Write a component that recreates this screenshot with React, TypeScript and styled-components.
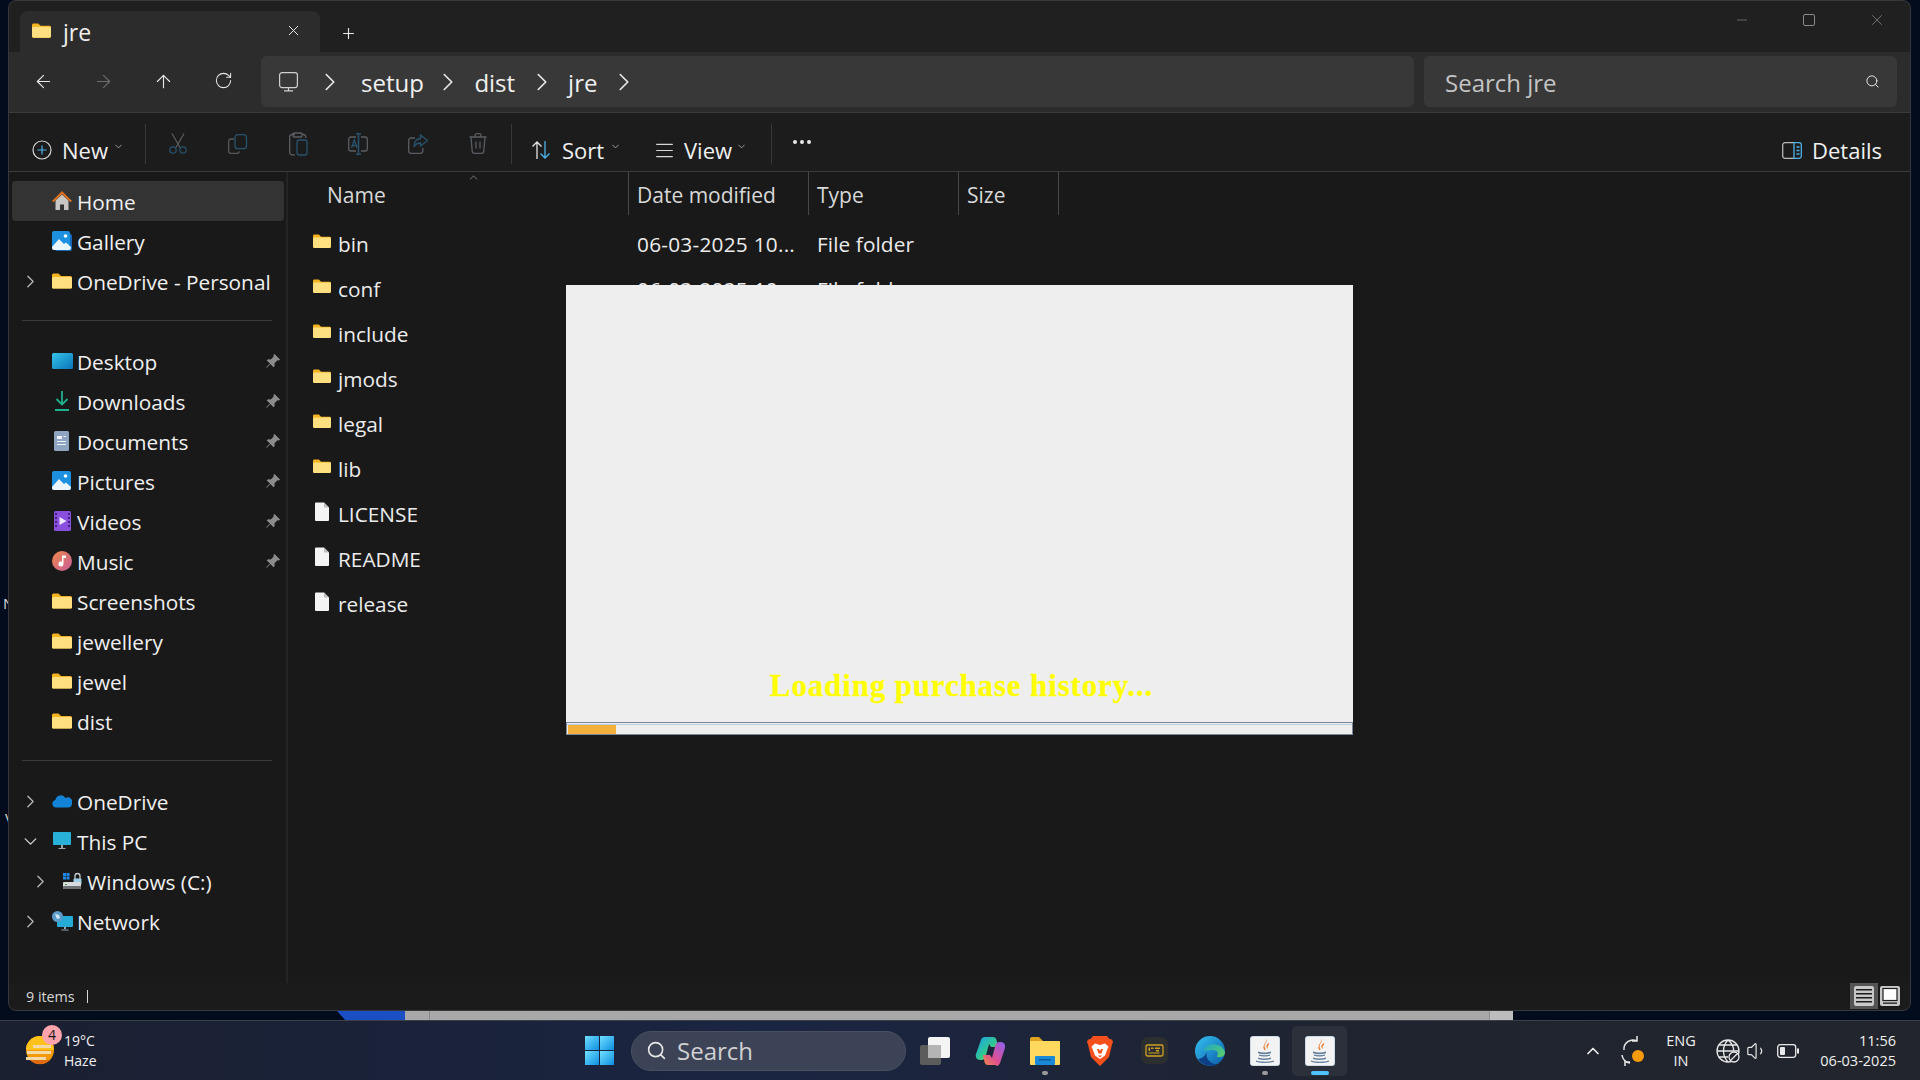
import React from "react";
import styled, { createGlobalStyle } from "styled-components";
import {
  ArrowLeft,
  ArrowRight,
  ArrowUp,
  RotateCw,
  ChevronRight,
  ChevronDown,
  ChevronUp,
  X,
  Plus,
  Minus,
  Search,
  MoreHorizontal,
  AlignJustify,
  Volume1,
} from "lucide-react";

const UI_FONT = `"Open Sans", "Noto Sans", "Liberation Sans", sans-serif`;

const GlobalStyle = createGlobalStyle`
  html, body { margin: 0; padding: 0; background: #020c1c; overflow: hidden; }
  * { box-sizing: border-box; }
  body { font-family: ${UI_FONT}; }
`;

/* ---------- drawn icons ---------- */

function FolderIcon({ size = 20 }: { size?: number }) {
  return (
    <svg width={size} height={size * 0.8} viewBox="0 0 20 16">
      <path d="M0 2a1.500 1.500 0 0 1 1.500-1.500h5L9 3h9.500A1.500 1.500 0 0 1 20 4.500V14a1.500 1.500 0 0 1-1.500 1.500h-17A1.500 1.500 0 0 1 0 14z" fill="#f4b320" />
      <path d="M0 5.500A1.500 1.500 0 0 1 1.500 4H18.500A1.500 1.500 0 0 1 20 5.500V14a1.500 1.500 0 0 1-1.500 1.500h-17A1.500 1.500 0 0 1 0 14z" fill="#ffdf80" />
    </svg>
  );
}

function FileIcon() {
  return (
    <svg width="18" height="20" viewBox="0 0 18 20">
      <path d="M2 1.500A1 1 0 0 1 3 .5h8l5 5V18a1 1 0 0 1-1 1H3a1 1 0 0 1-1-1z" fill="#f4f4f4" />
      <path d="M11 .5l5 5h-4a1 1 0 0 1-1-1z" fill="#bdbdbd" />
    </svg>
  );
}

function HomeIcon() {
  return (
    <svg width="20" height="20" viewBox="0 0 20 20">
      <path d="M3.500 9.500L10 3.500l6.500 6V19h-4.500v-5.500H8V19H3.500z" fill="#c9c5c2" />
      <path d="M0 10L10 0l10 10-1.500 1.200L10 3 1.500 11.200z" fill="#e0701c" />
    </svg>
  );
}

function PictureIcon({ stacked }: { stacked?: boolean }) {
  return (
    <svg width="20" height="20" viewBox="0 0 20 20">
      {stacked && <rect x="3" y="3" width="17" height="17" rx="2" fill="#1668b8" />}
      <rect x="0" y="0" width={stacked ? 18 : 19} height={stacked ? 18 : 19} rx="2" fill="#1e90e0" />
      <circle cx="13.500" cy="5" r="1.800" fill="#fff" />
      <path d="M0 16l7-8 5 5 2-1.500 5 4.500v1a2 2 0 0 1-2 2H2a2 2 0 0 1-2-2z" fill="#eaf5fd" />
    </svg>
  );
}

function DesktopIcon() {
  return (
    <svg width="21" height="17" viewBox="0 0 21 17">
      <defs>
        <linearGradient id="desk" x1="0" y1="0" x2="1" y2="1">
          <stop offset="0" stopColor="#35c4e8" />
          <stop offset="1" stopColor="#0a74b8" />
        </linearGradient>
      </defs>
      <rect width="21" height="16" rx="1.500" fill="url(#desk)" />
    </svg>
  );
}

function DownloadIcon() {
  return (
    <svg width="18" height="20" viewBox="0 0 18 20" fill="none" stroke="#1fb08e" strokeWidth="1.800">
      <path d="M9 0v13M3.500 8L9 13.500 14.500 8M2 19h14" />
    </svg>
  );
}

function DocumentIcon() {
  return (
    <svg width="16" height="20" viewBox="0 0 16 20">
      <rect width="15" height="20" rx="1.500" fill="#8ea4c0" />
      <path d="M3 5h5v3H3zM3 10h9v1H3zM3 13h9v1H3zM9.500 5H12v1H9.500z" fill="#eef3f8" />
    </svg>
  );
}

function VideoIcon() {
  return (
    <svg width="17" height="20" viewBox="0 0 17 20">
      <rect width="17" height="20" rx="1.500" fill="#8a4fdc" />
      <path d="M5.500 6l7 4-7 4z" fill="#f0e6ff" />
      <path d="M1 2h2v2H1zM1 6h2v2H1zM1 10h2v2H1zM1 14h2v2H1zM14 2h2v2h-2zM14 6h2v2h-2zM14 10h2v2h-2zM14 14h2v2h-2z" fill="#42207e" />
    </svg>
  );
}

function MusicIcon() {
  return (
    <svg width="20" height="20" viewBox="0 0 20 20">
      <defs>
        <linearGradient id="mus" x1="0" y1="0" x2="1" y2="1">
          <stop offset="0" stopColor="#f08a4a" />
          <stop offset="1" stopColor="#c85a9a" />
        </linearGradient>
      </defs>
      <circle cx="10" cy="10" r="10" fill="url(#mus)" />
      <path d="M10 4.500h4v2.500h-2.500v6a2.500 2.500 0 1 1-1.500-2.300z" fill="#fff" />
    </svg>
  );
}

function CloudIcon() {
  return (
    <svg width="20" height="14" viewBox="0 0 20 14">
      <path d="M4 13.500a3.800 3.800 0 0 1-.6-7.500A5.500 5.500 0 0 1 13.500 4a4.500 4.500 0 0 1 6.500 5.500 4 4 0 0 1-3.500 4z" fill="#1383d8" />
    </svg>
  );
}

function ThisPcIcon() {
  return (
    <svg width="18" height="18" viewBox="0 0 18 18">
      <rect width="18" height="13" rx="1" fill="#29b0d8" />
      <path d="M8 13h2v3H8zM5.500 16h7v1h-7z" fill="#9aa4ac" />
    </svg>
  );
}

function DriveIcon() {
  return (
    <svg width="20" height="18" viewBox="0 0 20 18">
      <path d="M1 1h3v3H1zM4.500 1h3v3h-3zM1 4.500h3v3H1zM4.500 4.500h3v3h-3z" fill="#1e88e5" />
      <path d="M13 7V4a2.500 2.500 0 0 1 5 0v3" fill="none" stroke="#c8ccd0" strokeWidth="1.300" />
      <rect x="11.500" y="6.500" width="8" height="6" rx="1" fill="#9fd0ea" />
      <rect x="1" y="10" width="18" height="7" rx="1" fill="#d8dadc" />
      <rect x="1" y="14" width="18" height="3" rx="1" fill="#6c7074" />
      <rect x="3" y="12" width="2" height="1" fill="#38a838" />
    </svg>
  );
}

function NetworkIcon() {
  return (
    <svg width="21" height="20" viewBox="0 0 21 20">
      <rect x="5" y="5" width="16" height="11" rx="1" fill="#25abd6" />
      <path d="M12 16h2v2h-2zM9.500 18.500h7v1h-7z" fill="#9aa4ac" />
      <circle cx="5.500" cy="5.500" r="5.500" fill="#5c9ccb" />
      <path d="M3 3l4 1 1 3-3 1z" fill="#d6e7f3" />
    </svg>
  );
}

function PinIcon() {
  return (
    <svg width="14" height="14" viewBox="0 0 14 14">
      <path d="M8.500 0L14 5.500l-1 1-1.500-.2-3 3 .2 2.700-1.200 1.200L4.500 10 .7 13.800l-.5-.5L4 9.500 .8 6.500 2 5.300l2.700.2 3-3-.2-1.500z" fill="#8c8c8c" />
    </svg>
  );
}

function MonitorIcon() {
  return (
    <svg width="19" height="20" viewBox="0 0 19 20" fill="none" stroke="#d0d0d0" strokeWidth="1.200">
      <rect x=".6" y=".6" width="17.800" height="15" rx="2.500" />
      <path d="M9.500 15.600v3M5 18.900h9" />
    </svg>
  );
}

function NewIcon() {
  return (
    <svg width="20" height="20" viewBox="0 0 20 20" fill="none">
      <circle cx="10" cy="10" r="9" stroke="#d8d8d8" strokeWidth="1.200" />
      <path d="M10 5.500v9M5.500 10h9" stroke="#4fb3ea" strokeWidth="1.200" />
    </svg>
  );
}

function CutIcon() {
  return (
    <svg width="18" height="21" viewBox="0 0 18 21" fill="none" strokeWidth="1.200">
      <path d="M3 .5l8 14M15 .5l-8 14" stroke="#5a5e62" />
      <circle cx="4" cy="17" r="3.200" stroke="#27536e" />
      <circle cx="14" cy="17" r="3.200" stroke="#27536e" />
    </svg>
  );
}

function CopyIcon() {
  return (
    <svg width="20" height="20" viewBox="0 0 20 20" fill="none" strokeWidth="1.300">
      <path d="M6 5H3a2.300 2.300 0 0 0-2.300 2.300V17A2.300 2.300 0 0 0 3 19.300h6a2.300 2.300 0 0 0 2.300-2" stroke="#55585c" />
      <rect x="7" y=".7" width="11.500" height="14" rx="3" stroke="#27536e" />
    </svg>
  );
}

function PasteIcon() {
  return (
    <svg width="19" height="24" viewBox="0 0 19 24" fill="none" stroke="#5a5e62" strokeWidth="1.300">
      <path d="M6 2.500H3A2.300 2.300 0 0 0 .7 4.800V20.500A2.300 2.300 0 0 0 3 22.800h3" />
      <path d="M5 1h7a1 1 0 0 1 1 1v2a1 1 0 0 1-1 1H5a1 1 0 0 1-1-1V2a1 1 0 0 1 1-1z" />
      <path d="M13 2.500h1.500A2.300 2.300 0 0 1 16.800 4.800V6" />
      <rect x="8" y="8" width="10" height="15" rx="2.300" stroke="#27536e" />
    </svg>
  );
}

function RenameIcon() {
  return (
    <svg width="20" height="22" viewBox="0 0 20 22" fill="none" stroke="#27536e" strokeWidth="1.300">
      <path d="M8 4H3a2.300 2.300 0 0 0-2.300 2.300v9.400A2.300 2.300 0 0 0 3 18h5M13 4h4a2.300 2.300 0 0 1 2.300 2.300v9.400A2.300 2.300 0 0 1 17 18h-4" stroke="#5a5e62" />
      <path d="M8 .7h5M8 21.300h5M10.500 .7v20.600" strokeWidth="1.500" />
      <path d="M3.500 15l2.800-8 2.800 8M4.500 12.500h3.600" />
    </svg>
  );
}

function ShareIcon() {
  return (
    <svg width="20" height="20" viewBox="0 0 20 20" fill="none" stroke="#5a5e62" strokeWidth="1.300">
      <path d="M7 4H3a2.300 2.300 0 0 0-2.300 2.300v11A2.300 2.300 0 0 0 3 19.300h9.500a2.300 2.300 0 0 0 2.300-2.300v-3" />
      <path d="M12.500 1l7 5.500-7 5.500V9c-3 0-5 1-6.500 4 0-5 2-8 6.500-8.500z" stroke="#27536e" />
    </svg>
  );
}

function TrashIcon() {
  return (
    <svg width="18" height="21" viewBox="0 0 18 21" fill="none" stroke="#5a5e62" strokeWidth="1.300">
      <path d="M.5 4h17M6 4V2.500A1.800 1.800 0 0 1 7.800.7h2.400A1.800 1.800 0 0 1 12 2.500V4" />
      <path d="M2 4l1.200 14a2.300 2.300 0 0 0 2.300 2.300h7a2.300 2.300 0 0 0 2.300-2.300L16 4M7 8.500v7M11 8.500v7" />
    </svg>
  );
}

function SortIcon() {
  return (
    <svg width="20" height="20" viewBox="0 0 20 20" fill="none" strokeWidth="1.300">
      <path d="M6 19V2M1.500 6.500L6 2l4.500 4.500" stroke="#e4e4e4" />
      <path d="M14 1v17M9.500 13.500L14 18l4.500-4.500" stroke="#4fb3ea" />
    </svg>
  );
}

function DetailsIcon() {
  return (
    <svg width="20" height="17" viewBox="0 0 20 17" fill="none" strokeWidth="1.300">
      <path d="M12 .7H3a2.300 2.300 0 0 0-2.300 2.300v11A2.300 2.300 0 0 0 3 16.300h9" stroke="#b8b8b8" />
      <path d="M12 .7h5a2.300 2.300 0 0 1 2.300 2.300v11a2.300 2.300 0 0 1-2.300 2.300h-5z" stroke="#4fb3ea" />
      <path d="M14.500 5h3M14.500 8.500h3M14.500 12h3" stroke="#4fb3ea" />
    </svg>
  );
}

function WeatherIcon() {
  return (
    <svg width="30" height="34" viewBox="0 0 30 34">
      <circle cx="15" cy="16" r="14" fill="#f49a0a" />
      <path d="M15 2a14 14 0 0 1 14 14H1A14 14 0 0 1 15 2z" fill="#ffc21a" />
      <path d="M5 26a14 14 0 0 0 20 0z" fill="#e06a10" />
      <path d="M8 11h18v3H8zM2 17h24v3H2zM1 23h20v3H1z" fill="#f3d9a8" />
    </svg>
  );
}

function WindowsLogo() {
  return (
    <svg width="29" height="29" viewBox="0 0 29 29">
      <defs>
        <linearGradient id="win" x1="0" y1="0" x2="1" y2="1">
          <stop offset="0" stopColor="#6fe0ff" />
          <stop offset="1" stopColor="#0e8ee0" />
        </linearGradient>
      </defs>
      <rect x="0" y="0" width="14" height="14" fill="url(#win)" />
      <rect x="15" y="0" width="14" height="14" fill="url(#win)" />
      <rect x="0" y="15" width="14" height="14" fill="url(#win)" />
      <rect x="15" y="15" width="14" height="14" fill="url(#win)" />
    </svg>
  );
}

function TaskViewIcon() {
  return (
    <svg width="30" height="28" viewBox="0 0 30 28">
      <rect x="8" y="0" width="22" height="21" rx="2" fill="#f4f4f4" />
      <rect x="0" y="8" width="21" height="20" rx="2" fill="#5c5c5c" />
      <rect x="8" y="8" width="13" height="13" fill="#b4b4b4" />
    </svg>
  );
}

function CopilotIcon() {
  return (
    <svg width="30" height="30" viewBox="0 0 30 30">
      <defs>
        <linearGradient id="cop1" x1="0" y1="0" x2="1" y2="1">
          <stop offset="0" stopColor="#1aa0f0" />
          <stop offset="0.55" stopColor="#30c890" />
          <stop offset="1" stopColor="#f4c020" />
        </linearGradient>
        <linearGradient id="cop2" x1="1" y1="0" x2="0" y2="1">
          <stop offset="0" stopColor="#8a60f0" />
          <stop offset="0.6" stopColor="#e05090" />
          <stop offset="1" stopColor="#f09040" />
        </linearGradient>
      </defs>
      <path d="M10 1h8c2 0 3 1 3.500 3L23 11h-7l-2-3-3.500 13c-.5 2-2 3-4 3H5c-3 0-5-3-4-6L6 4c.6-2 2-3 4-3z" fill="url(#cop1)" />
      <path d="M21 29h-8c-2 0-3-1-3.500-3L8 19h7l2 3 3.500-13c.5-2 2-3 4-3H26c3 0 5 3 4 6l-5 15c-.6 2-2 3-4 3z" fill="url(#cop2)" />
    </svg>
  );
}

function ExplorerIcon() {
  return (
    <svg width="30" height="28" viewBox="0 0 30 28">
      <path d="M0 2a2 2 0 0 1 2-2h7l4 4h15a2 2 0 0 1 2 2v4H0z" fill="#dfa320" />
      <rect x="0" y="4" width="30" height="24" rx="1" fill="#ffd95e" />
      <rect x="5" y="19" width="20" height="9" rx="1" fill="#1a8ad8" />
      <rect x="9" y="22" width="12" height="1.500" fill="#0c5c9c" />
    </svg>
  );
}

function BraveIcon() {
  return (
    <svg width="26" height="30" viewBox="0 0 26 30">
      <path d="M6 0h14l2.500 3L25 3.500 26 6l-1 2.500L22 21l-9 9-9-9L1 8.500 0 6l1-2.500L3.500 3z" fill="#f4501e" />
      <path d="M8 7.500l5 1.500 5-1.500 3.500 3-2 5-1.500 4-5 3.500-5-3.500-1.500-4-2-5z" fill="#fff" />
      <path d="M10 13h2l1 2 1-2h2l-1.500 4.500H11.500z" fill="#f4501e" />
      <path d="M11 19.500h4l-2 2z" fill="#f4501e" />
    </svg>
  );
}

function ChipAppIcon() {
  return (
    <svg width="27" height="27" viewBox="0 0 27 27">
      <rect width="27" height="27" rx="7" fill="#2c2e30" />
      <rect x="5" y="8" width="17" height="11" rx="1.500" fill="none" stroke="#cfa224" strokeWidth="1.300" />
      <path d="M7.500 10.500h1.500v3.500H7.500zM10 10.500h2.500v1.500H10zM14 10.500h5v1.500h-5zM15 13h3v1.500h-3zM7.500 15.500h11v1h-11z" fill="#cfa224" />
    </svg>
  );
}

function EdgeIcon() {
  return (
    <svg width="30" height="30" viewBox="0 0 30 30">
      <defs>
        <linearGradient id="edge1" x1="0" y1="0" x2="1" y2="1">
          <stop offset="0" stopColor="#35c1f1" />
          <stop offset="1" stopColor="#0b5ca8" />
        </linearGradient>
        <linearGradient id="edge2" x1="0" y1="0" x2="1" y2="1">
          <stop offset="0" stopColor="#1fa8c8" />
          <stop offset="1" stopColor="#60d060" />
        </linearGradient>
      </defs>
      <circle cx="15" cy="15" r="15" fill="url(#edge1)" />
      <path d="M9 15C9 7 26 5 30 16c0 5-5 6-8.500 4.500 2.500-2 2-6.500-4-6.500-4.500 0-8.500 1-8.500 1z" fill="url(#edge2)" />
      <path d="M12 16c-2 6 3 11 9.500 12.500-3 2-13 2.500-18.500-5.500 3 0 6.500-2 9-7z" fill="#0d3f86" />
    </svg>
  );
}

function JavaIcon() {
  return (
    <svg width="30" height="30" viewBox="0 0 30 30">
      <rect width="30" height="30" rx="3" fill="#c4d4e4" />
      <rect x=".8" y=".8" width="28.400" height="28.400" rx="2.500" fill="#f3f3f3" />
      <path d="M16 3c2.500 3-3 5.500-1 9 .6 1 .6 1.600 0 2.500-3-3-1-5.500.2-7.500.7-1.200 1.200-2.400.8-4zM19 7c.8 1.800-2.500 3-.8 6-2-1-3-4 .8-6z" fill="#e8762a" />
      <path d="M8 15.500c4 1.200 9 1.200 13 0v1.800c-4 1.200-9 1.200-13 0zM9 18.500c3.500 1 8 1 11 0v1.300c-3 1-8 1-11 0zM8 21.500c4 1.300 9 1.300 13 0v1.400c-4 1.300-9 1.300-13 0zM6 24.500c5 1.600 13 1.600 18 0v1.300c-5 1.700-13 1.700-18 0z" fill="#64819e" />
    </svg>
  );
}

function SyncIcon() {
  return (
    <svg width="26" height="30" viewBox="0 0 26 30" fill="none" stroke="#e8e8e8" strokeWidth="1.500">
      <path d="M4 14a9 9 0 0 1 13-9M17 0v5h-5" />
      <path d="M2 19a9 9 0 0 0 8 8M5 30v-4h5" />
      <circle cx="18" cy="20" r="6" fill="#f59a0a" stroke="none" />
    </svg>
  );
}

function GlobeIcon() {
  return (
    <svg width="24" height="24" viewBox="0 0 24 24" fill="none" stroke="#e8e8e8" strokeWidth="1.300">
      <path d="M12 1a11 11 0 1 0 0 22 11 11 0 1 0 0-22zM1 12h22M3 6h18M3 18h9M12 1c-6 6-6 16 0 22M12 1c5 4 6 9 5.500 11" />
      <circle cx="18" cy="18" r="5" fill="#20242e" />
      <path d="M15 21l6-6" />
    </svg>
  );
}

function BatteryIcon() {
  return (
    <svg width="22" height="14" viewBox="0 0 22 14" fill="none">
      <rect x=".7" y=".7" width="18" height="12.600" rx="2.500" stroke="#e8e8e8" strokeWidth="1.300" />
      <rect x="3" y="3" width="5" height="8" rx="1" fill="#e8e8e8" />
      <rect x="20" y="4.500" width="2" height="5" fill="#e8e8e8" />
    </svg>
  );
}

function ListViewIcon() {
  return (
    <svg width="20" height="20" viewBox="0 0 20 20">
      <rect width="20" height="20" rx="2" fill="#c8c8c8" />
      <path d="M2 3h16v1.500H2zM2 7h16v1.500H2zM2 11h16v1.500H2zM2 15h16v1.500H2z" fill="#1c1c1c" />
    </svg>
  );
}

function TileViewIcon() {
  return (
    <svg width="20" height="20" viewBox="0 0 20 20">
      <rect width="20" height="20" rx="2" fill="#c8c8c8" />
      <rect x="3" y="2.500" width="14" height="12" fill="#fff" stroke="#1c1c1c" strokeWidth="1.200" />
      <rect x="3" y="16.500" width="14" height="1.300" fill="#1c1c1c" />
    </svg>
  );
}

/* ---------- data ---------- */

type NavItem = {
  label: string;
  icon: React.ReactNode;
  chevron?: "right" | "down";
  pinned?: boolean;
  active?: boolean;
  indent?: boolean;
};

const quickTop: NavItem[] = [
  { label: "Home", icon: <HomeIcon />, active: true },
  { label: "Gallery", icon: <PictureIcon stacked /> },
  { label: "OneDrive - Personal", icon: <FolderIcon />, chevron: "right" },
];

const quickPinned: NavItem[] = [
  { label: "Desktop", icon: <DesktopIcon />, pinned: true },
  { label: "Downloads", icon: <DownloadIcon />, pinned: true },
  { label: "Documents", icon: <DocumentIcon />, pinned: true },
  { label: "Pictures", icon: <PictureIcon />, pinned: true },
  { label: "Videos", icon: <VideoIcon />, pinned: true },
  { label: "Music", icon: <MusicIcon />, pinned: true },
  { label: "Screenshots", icon: <FolderIcon /> },
  { label: "jewellery", icon: <FolderIcon /> },
  { label: "jewel", icon: <FolderIcon /> },
  { label: "dist", icon: <FolderIcon /> },
];

const quickBottom: NavItem[] = [
  { label: "OneDrive", icon: <CloudIcon />, chevron: "right" },
  { label: "This PC", icon: <ThisPcIcon />, chevron: "down" },
  { label: "Windows (C:)", icon: <DriveIcon />, chevron: "right", indent: true },
  { label: "Network", icon: <NetworkIcon />, chevron: "right" },
];

const files = [
  { name: "bin", folder: true, date: "06-03-2025 10...", type: "File folder" },
  { name: "conf", folder: true, date: "06-03-2025 10...", type: "File folder" },
  { name: "include", folder: true },
  { name: "jmods", folder: true },
  { name: "legal", folder: true },
  { name: "lib", folder: true },
  { name: "LICENSE", folder: false },
  { name: "README", folder: false },
  { name: "release", folder: false },
];

/* ---------- app ---------- */

function NavRow({ item }: { item: NavItem }) {
  return (
    <SideRow $active={item.active} $indent={item.indent}>
      <ChevronSlot>
        {item.chevron === "right" && <ChevronRight size={21} strokeWidth={1.6} color="#b4b4b4" />}
        {item.chevron === "down" && <ChevronDown size={21} strokeWidth={1.6} color="#d0d0d0" />}
      </ChevronSlot>
      <IconSlot>{item.icon}</IconSlot>
      <SideLabel>{item.label}</SideLabel>
      {item.pinned && (
        <PinSlot>
          <PinIcon />
        </PinSlot>
      )}
    </SideRow>
  );
}

function Crumb() {
  return <ChevronRight size={30} strokeWidth={1.3} color="#ececec" />;
}

export default function App() {
  return (
    <>
      <GlobalStyle />
      <Desktop>
        <BackWindow />
        <Wallpaper />
        <DesktopLabel $top={593} $left={3}>N</DesktopLabel>
        <DesktopLabel $top={808} $left={5}>V</DesktopLabel>
        <Stage>
          <Explorer>
            <TabStrip>
              <Tab>
                <FolderIcon size={19} />
                <TabTitle>jre</TabTitle>
                <TabClose>
                  <X size={17} strokeWidth={1.4} color="#e8e8e8" />
                </TabClose>
              </Tab>
              <NewTab>
                <Plus size={17} strokeWidth={1.6} color="#e8e8e8" />
              </NewTab>
              <WindowControls>
                <Minus size={16} strokeWidth={1} color="#8a8a8a" />
                <MaximizeBox />
                <X size={18} strokeWidth={1} color="#8a8a8a" />
              </WindowControls>
            </TabStrip>

            <AddressRow>
              <NavButtons>
                <NavButton><ArrowLeft size={21} strokeWidth={1.3} color="#e8e8e8" /></NavButton>
                <NavButton><ArrowRight size={21} strokeWidth={1.3} color="#6d6d6d" /></NavButton>
                <NavButton><ArrowUp size={21} strokeWidth={1.3} color="#e8e8e8" /></NavButton>
                <NavButton><RotateCw size={19} strokeWidth={1.3} color="#e8e8e8" /></NavButton>
              </NavButtons>
              <Breadcrumb>
                <MonitorIcon />
                <Crumbs>
                  <Crumb />
                  <CrumbText $left={10} $right={3}>setup</CrumbText>
                  <Crumb />
                  <CrumbText $left={5.5} $right={5.5}>dist</CrumbText>
                  <Crumb />
                  <CrumbText $left={5.5} $right={5.5}>jre</CrumbText>
                  <Crumb />
                </Crumbs>
              </Breadcrumb>
              <SearchBox>
                <SearchHint>Search jre</SearchHint>
                <Search size={15} strokeWidth={1.6} color="#e8e8e8" />
              </SearchBox>
            </AddressRow>

            <Toolbar>
              <CommandGroup $width={113}>
                <NewIcon />
                <CommandText>New</CommandText>
                <CommandCaret><ChevronDown size={11} strokeWidth={1.6} color="#c8c8c8" /></CommandCaret>
              </CommandGroup>
              <ToolDivider />
              <ToolIcon $first><CutIcon /></ToolIcon>
              <ToolIcon><CopyIcon /></ToolIcon>
              <ToolIcon><PasteIcon /></ToolIcon>
              <ToolIcon><RenameIcon /></ToolIcon>
              <ToolIcon><ShareIcon /></ToolIcon>
              <ToolIcon $last><TrashIcon /></ToolIcon>
              <ToolDivider />
              <CommandGroup $width={123} $gap={11} $lead={19}>
                <SortIcon />
                <CommandText>Sort</CommandText>
                <CommandCaret><ChevronDown size={11} strokeWidth={1.6} color="#c8c8c8" /></CommandCaret>
              </CommandGroup>
              <CommandGroup $width={117} $gap={9}>
                <AlignJustify size={21} strokeWidth={1.2} color="#d8d8d8" />
                <CommandText>View</CommandText>
                <CommandCaret><ChevronDown size={11} strokeWidth={1.6} color="#c8c8c8" /></CommandCaret>
              </CommandGroup>
              <ToolDivider />
              <MoreButton><MoreHorizontal size={24} strokeWidth={2} color="#e8e8e8" /></MoreButton>
              <DetailsButton>
                <DetailsIcon />
                <CommandText>Details</CommandText>
              </DetailsButton>
            </Toolbar>

            <Body>
              <Sidebar>
                {quickTop.map((item) => <NavRow key={item.label} item={item} />)}
                <SideDivider />
                {quickPinned.map((item) => <NavRow key={item.label} item={item} />)}
                <SideDivider />
                {quickBottom.map((item) => <NavRow key={item.label} item={item} />)}
              </Sidebar>
              <FilePane>
                <HeaderRow>
                  <NameHead>
                    Name
                    <SortCaret><ChevronUp size={13} strokeWidth={1.1} color="#bdbdbd" /></SortCaret>
                  </NameHead>
                  <HeadCell $width={180}>Date modified</HeadCell>
                  <HeadCell $width={150}>Type</HeadCell>
                  <HeadCell $width={101} $last>Size</HeadCell>
                </HeaderRow>
                <FileList>
                  {files.map((f) => (
                    <FileRow key={f.name}>
                      <FileName>
                        <FileGlyph>{f.folder ? <FolderIcon size={18} /> : <FileIcon />}</FileGlyph>
                        {f.name}
                      </FileName>
                      <DateCell>{f.date}</DateCell>
                      <TypeCell>{f.type}</TypeCell>
                    </FileRow>
                  ))}
                </FileList>
              </FilePane>
            </Body>

            <StatusBar>
              <StatusText>9 items</StatusText>
              <StatusBarDivider />
              <ViewToggles>
                <ViewToggle $active><ListViewIcon /></ViewToggle>
                <ViewToggle><TileViewIcon /></ViewToggle>
              </ViewToggles>
            </StatusBar>
          </Explorer>
        </Stage>

        <Splash>
          <SplashMessage>Loading purchase history...</SplashMessage>
          <ProgressTrack>
            <ProgressFill style={{ width: `${(48 / 785) * 100}%` }} />
          </ProgressTrack>
        </Splash>

        <Taskbar>
          <WeatherWidget>
            <WeatherGlyph>
              <WeatherIcon />
              <WeatherBadge>4</WeatherBadge>
            </WeatherGlyph>
            <WeatherText>
              <span>19°C</span>
              <span>Haze</span>
            </WeatherText>
          </WeatherWidget>
          <TaskCenter>
            <WindowsLogo />
            <TaskSearch>
              <Search size={21} strokeWidth={1.8} color="#e8e8e8" />
              <span>Search</span>
            </TaskSearch>
            <TaskApps>
              <TaskApp><TaskViewIcon /></TaskApp>
              <TaskApp><CopilotIcon /></TaskApp>
              <TaskApp $running><ExplorerIcon /></TaskApp>
              <TaskApp><BraveIcon /></TaskApp>
              <TaskApp><ChipAppIcon /></TaskApp>
              <TaskApp><EdgeIcon /></TaskApp>
              <TaskApp $running><JavaIcon /></TaskApp>
              <TaskApp $focused><JavaIcon /></TaskApp>
            </TaskApps>
          </TaskCenter>
          <Tray>
            <ChevronUp size={20} strokeWidth={2} color="#f0f0f0" />
            <TrayGap $w={17} />
            <SyncIcon />
            <TrayGap $w={15} />
            <LangBlock>
              <span>ENG</span>
              <span>IN</span>
            </LangBlock>
            <TrayGap $w={15} />
            <GlobeIcon />
            <TrayGap $w={6} />
            <Volume1 size={22} strokeWidth={1.3} color="#e8e8e8" />
            <TrayGap $w={9} />
            <BatteryIcon />
            <Clock>
              <span>11:56</span>
              <span>06-03-2025</span>
            </Clock>
          </Tray>
        </Taskbar>
      </Desktop>
    </>
  );
}

/* ---------- styles ---------- */

const Desktop = styled.div`
  position: relative;
  width: 1920px;
  height: 1080px;
  background: #020c1c;
  display: flex;
  flex-direction: column;
  overflow: hidden;
`;

const BackWindow = styled.div`
  position: absolute;
  left: 405px;
  top: 0;
  width: 1108px;
  height: 1020px;
  background: linear-gradient(to right, #a8a8a8 0 24px, #8a8a8a 24px 25px, #a8a8a8 25px 1084px, #8f8f8f 1084px 1085px, #bdbdbd 1085px);
`;

const Wallpaper = styled.div`
  position: absolute;
  left: 337px;
  top: 1011px;
  width: 68px;
  height: 9px;
  background: #1a4fc4;
  clip-path: polygon(0 0, 100% 0, 100% 100%, 12% 100%);
`;

const DesktopLabel = styled.span<{ $top: number; $left: number }>`
  position: absolute;
  top: ${(p) => p.$top}px;
  left: ${(p) => p.$left}px;
  font-size: 15px;
  color: #d8d8d8;
`;

const Stage = styled.div`
  position: relative;
  flex: 0 0 1020px;
  padding: 0 9px 9px 8px;
`;

const Explorer = styled.div`
  position: relative;
  height: 1011px;
  background: #191919;
  border-radius: 8px;
  display: flex;
  flex-direction: column;
  overflow: hidden;
  color: #f0f0f0;

  &::after {
    content: "";
    position: absolute;
    inset: 0;
    border: 1px solid #34383f;
    border-radius: 8px;
    pointer-events: none;
  }
`;

const TabStrip = styled.div`
  flex: 0 0 52px;
  background: #202020;
  display: flex;
  align-items: flex-end;
  padding-left: 12px;
`;

const Tab = styled.div`
  width: 300px;
  height: 41px;
  background: #2c2c2c;
  border-radius: 8px 8px 0 0;
  display: flex;
  align-items: center;
  padding: 0 18px 2px 12px;
`;

const TabTitle = styled.span`
  margin: 2px 0 0 12px;
  font-size: 23px;
  line-height: 28px;
`;

const TabClose = styled.span`
  margin-left: auto;
  display: flex;
`;

const NewTab = styled.span`
  display: flex;
  margin: 0 0 10px 20px;
`;

const WindowControls = styled.div`
  margin: 0 25px 23px auto;
  width: 152px;
  display: flex;
  align-items: center;
  justify-content: space-between;
`;

const MaximizeBox = styled.span`
  width: 12px;
  height: 12px;
  border: 1px solid #8a8a8a;
  border-radius: 2px;
`;

const AddressRow = styled.div`
  flex: 0 0 61px;
  background: #2c2c2c;
  border-bottom: 1px solid #3b3b3b;
  display: flex;
  align-items: center;
  padding: 0 14px 1px 5px;
`;

const NavButtons = styled.div`
  display: flex;
  width: 248px;
`;

const NavButton = styled.span`
  width: 60px;
  display: flex;
  justify-content: center;
`;

const Breadcrumb = styled.div`
  width: 1153px;
  height: 51px;
  background: #383838;
  border-radius: 6px;
  display: flex;
  align-items: center;
  padding-left: 18px;
`;

const Crumbs = styled.div`
  display: flex;
  align-items: center;
  margin-left: 17px;
  gap: 6px;
`;

const CrumbText = styled.span<{ $left: number; $right: number }>`
  font-size: 24px;
  line-height: 30px;
  margin: 2px ${(p) => p.$right}px 0 ${(p) => p.$left}px;
`;

const SearchBox = styled.div`
  margin-left: 10px;
  flex: 1;
  height: 51px;
  background: #383838;
  border-radius: 6px;
  display: flex;
  align-items: center;
  justify-content: space-between;
  padding: 0 17px 0 21px;
`;

const SearchHint = styled.span`
  font-size: 24px;
  margin-top: 2px;
  color: #c4c4c4;
`;

const Toolbar = styled.div`
  flex: 0 0 59px;
  background: #1c1c1c;
  border-bottom: 1px solid #3b3b3b;
  display: flex;
  align-items: center;
  padding: 3px 29px 0 24px;
`;

const CommandGroup = styled.div<{ $width: number; $gap?: number; $lead?: number }>`
  width: ${(p) => p.$width}px;
  margin-left: ${(p) => p.$lead ?? 0}px;
  margin-top: 13px;
  display: flex;
  align-items: center;
  gap: ${(p) => p.$gap ?? 10}px;
`;

const CommandText = styled.span`
  font-size: 22px;
  line-height: 28px;
`;

const CommandCaret = styled.span`
  display: flex;
  margin: -8px 0 0 -5px;
`;

const ToolDivider = styled.span`
  width: 1px;
  height: 40px;
  background: #383838;
`;

const ToolIcon = styled.span<{ $first?: boolean; $last?: boolean }>`
  width: 60px;
  display: flex;
  justify-content: center;
  margin-left: ${(p) => (p.$first ? "2px" : "0")};
  margin-right: ${(p) => (p.$last ? "3px" : "0")};
`;

const MoreButton = styled.span`
  display: flex;
  margin: -3px 0 0 18px;
`;

const DetailsButton = styled.div`
  margin: 13px 0 0 auto;
  display: flex;
  align-items: center;
  gap: 10px;
`;

const Body = styled.div`
  flex: 1;
  display: flex;
  min-height: 0;
`;

const Sidebar = styled.nav`
  flex: 0 0 280px;
  border-right: 2px solid #242424;
  padding-top: 9px;
`;

const SideRow = styled.div<{ $active?: boolean; $indent?: boolean }>`
  height: 40px;
  margin: 0 2px 0 4px;
  padding-left: ${(p) => (p.$indent ? "10px" : "0")};
  border-radius: 4px;
  display: flex;
  align-items: center;
  background: ${(p) => (p.$active ? "#333333" : "transparent")};
`;

const ChevronSlot = styled.span`
  flex: 0 0 38px;
  padding-left: 8px;
  display: flex;
  align-items: center;
`;

const IconSlot = styled.span`
  flex: 0 0 24px;
  display: flex;
  align-items: center;
  justify-content: center;
`;

const SideLabel = styled.span`
  margin: 2px 0 0 3px;
  font-size: 20.8px;
  line-height: 28px;
  white-space: nowrap;
`;

const PinSlot = styled.span`
  margin-left: auto;
  padding-right: 4px;
  display: flex;
`;

const SideDivider = styled.div`
  height: 1px;
  margin: 19px 14px 20px 14px;
  background: #3b3b3b;
`;

const FilePane = styled.section`
  flex: 1;
  min-width: 0;
`;

const HeaderRow = styled.div`
  height: 43px;
  display: flex;
  font-size: 21px;
  color: #d8d8d8;
`;

const NameHead = styled.div`
  position: relative;
  width: 340px;
  padding-left: 39px;
  line-height: 46px;
`;

const SortCaret = styled.span`
  position: absolute;
  left: 179px;
  top: -1px;
  display: flex;
`;

const HeadCell = styled.div<{ $width: number; $last?: boolean }>`
  width: ${(p) => p.$width}px;
  padding-left: 8px;
  line-height: 46px;
  border-left: 1px solid #484848;
  border-right: ${(p) => (p.$last ? "1px solid #484848" : "none")};
`;

const FileList = styled.div`
  margin-top: 6px;
`;

const FileRow = styled.div`
  height: 45px;
  display: flex;
  align-items: center;
  font-size: 20.8px;
  color: #ececec;
`;

const FileName = styled.div`
  width: 340px;
  padding-left: 25px;
  display: flex;
  align-items: center;
`;

const FileGlyph = styled.span`
  flex: 0 0 25px;
  display: flex;
  margin-top: -4px;
`;

const DateCell = styled.div`
  width: 180px;
  padding-left: 9px;
  letter-spacing: 0.25px;
  white-space: nowrap;
`;

const TypeCell = styled.div`
  padding-left: 9px;
  letter-spacing: 0.1px;
`;

const StatusBar = styled.div`
  flex: 0 0 28px;
  display: flex;
  align-items: center;
  padding: 0 0 2px 18px;
  background: #1b1b1b;
`;

const StatusText = styled.span`
  font-size: 14.3px;
  color: #d8d8d8;
`;

const StatusBarDivider = styled.span`
  width: 1px;
  height: 13px;
  margin-left: 12px;
  background: #d8d8d8;
`;

const ViewToggles = styled.div`
  margin-left: auto;
  height: 100%;
  display: flex;
  padding-right: 9px;
`;

const ViewToggle = styled.span<{ $active?: boolean }>`
  width: ${(p) => (p.$active ? "28px" : "24px")};
  display: flex;
  align-items: center;
  justify-content: center;
  background: ${(p) => (p.$active ? "#555555" : "transparent")};
`;

const Splash = styled.div`
  position: absolute;
  left: 566px;
  top: 285px;
  width: 787px;
  height: 450px;
  background: #eeeeee;
  display: flex;
  flex-direction: column;
  justify-content: flex-end;
`;

const SplashMessage = styled.div`
  font-family: "Liberation Serif", "Times New Roman", serif;
  font-weight: 700;
  font-size: 31px;
  line-height: 36px;
  letter-spacing: 0.85px;
  -webkit-text-stroke: 0.3px #ffff00;
  color: #ffff00;
  text-align: center;
  padding-left: 4px;
  margin-bottom: 18px;
`;

const ProgressTrack = styled.div`
  height: 13px;
  background: #eeeeee;
  border: 1px solid #7a889e;
  box-shadow: inset 0 1px 0 #eeeeee, inset 0 2px 0 #b9cfe6;
  padding: 2px 1px 0;
`;

const ProgressFill = styled.div`
  height: 100%;
  background: #f5b03c;
`;

const Taskbar = styled.footer`
  flex: 0 0 60px;
  position: relative;
  border-top: 1px solid #3b4048;
  background: linear-gradient(to right, #1a2030 0%, #1a2542 40%, #1f2430 70%, #22252c 100%);
  display: flex;
  align-items: center;
  color: #f0f0f0;
`;

const WeatherWidget = styled.div`
  flex: 0 0 585px;
  display: flex;
  align-items: center;
  padding-left: 25px;
`;

const WeatherGlyph = styled.span`
  position: relative;
  display: flex;
`;

const WeatherBadge = styled.span`
  position: absolute;
  right: -7px;
  top: -9px;
  width: 20px;
  height: 20px;
  border-radius: 50%;
  background: #ffa3ad;
  color: #1a1a1a;
  font-size: 14px;
  line-height: 20px;
  text-align: center;
`;

const WeatherText = styled.div`
  margin-left: 9px;
  display: flex;
  flex-direction: column;
  font-size: 14px;
  line-height: 20px;
`;

const TaskCenter = styled.div`
  display: flex;
  align-items: center;
`;

const TaskSearch = styled.div`
  margin-left: 17px;
  width: 275px;
  height: 40px;
  border-radius: 20px;
  background: #3c4356;
  border: 1px solid #4a5062;
  display: flex;
  align-items: center;
  gap: 10px;
  padding-left: 14px;
  font-size: 24px;
  color: #d0d0d0;
`;

const TaskApps = styled.div`
  margin-left: 1px;
  display: flex;
`;

const TaskApp = styled.span<{ $running?: boolean; $focused?: boolean }>`
  position: relative;
  width: 55px;
  height: 50px;
  display: flex;
  align-items: center;
  justify-content: center;
  border-radius: 5px;
  background: ${(p) => (p.$focused ? "#2c303a" : "transparent")};

  &::after {
    content: "";
    display: ${(p) => (p.$running || p.$focused ? "block" : "none")};
    position: absolute;
    bottom: 1px;
    left: 50%;
    transform: translateX(-50%);
    width: ${(p) => (p.$focused ? "18px" : "6px")};
    height: 4px;
    border-radius: 2px;
    background: ${(p) => (p.$focused ? "#4cc2ff" : "#9a9a9a")};
  }
`;

const Tray = styled.div`
  margin-left: auto;
  width: 337px;
  padding-right: 24px;
  display: flex;
  align-items: center;
`;

const TrayGap = styled.span<{ $w: number }>`
  flex: 0 0 ${(p) => p.$w}px;
`;

const LangBlock = styled.div`
  width: 40px;
  display: flex;
  flex-direction: column;
  align-items: center;
  font-size: 14.5px;
  line-height: 20px;
`;

const Clock = styled.div`
  margin-left: auto;
  display: flex;
  flex-direction: column;
  align-items: flex-end;
  font-size: 14.5px;
  line-height: 20px;
`;
